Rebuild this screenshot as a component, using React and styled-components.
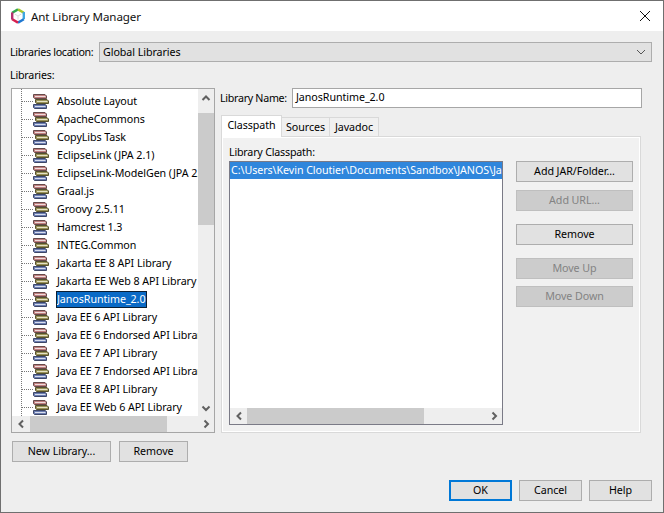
import React from "react";
import styled, { createGlobalStyle } from "styled-components";

const GlobalStyle = createGlobalStyle`
  html, body {
    margin: 0;
    padding: 0;
    background: #eeeeee;
  }
  * {
    box-sizing: border-box;
  }
`;

const Window = styled.div`
  width: 664px;
  height: 513px;
  display: flex;
  flex-direction: column;
  border: 1px solid #6f6f6f;
  background: #eeeeee;
  color: #000;
  font-family: "Noto Sans", "Open Sans", sans-serif;
  font-size: 10.7px;
  letter-spacing: -0.06px;
  overflow: hidden;
`;

const TitleBar = styled.div`
  height: 30px;
  flex: none;
  display: flex;
  align-items: center;
  gap: 5px;
  padding: 0 12px 0 9px;
  background: #fff;
`;

const Title = styled.span`
  flex: 1;
  font-size: 11.6px;
  letter-spacing: -0.1px;
  color: #111;
`;

const Content = styled.div`
  flex: 1;
  display: flex;
  flex-direction: column;
  padding: 11px 11px 11px 9px;
`;

const LocationRow = styled.div`
  display: flex;
  align-items: center;
  gap: 5px;
  height: 20px;
`;

const FieldLabel = styled.span`
  flex: none;
  width: ${(p) => p.$width}px;
  white-space: nowrap;
  letter-spacing: -0.3px;
  padding-bottom: 1px;
`;

const Combo = styled.div`
  flex: 1;
  height: 20px;
  display: flex;
  align-items: center;
  justify-content: space-between;
  padding: 0 5px 1px 3px;
  background: #e1e1e1;
  border: 1px solid #adadad;
`;

const SectionLabel = styled.div`
  margin: ${(p) => p.$margin || "0"};
  line-height: 15px;
  letter-spacing: -0.2px;
`;

const Main = styled.div`
  display: flex;
  margin: 5px 0 0 1px;
  gap: 6px;
`;

const LeftColumn = styled.div`
  width: 204px;
  display: flex;
  flex-direction: column;
`;

const ListBox = styled.div`
  display: flex;
  flex-direction: column;
  background: #fff;
  border: 1px solid ${(p) => p.$borderColor || "#a6a6a6"};
  height: ${(p) => p.$height}px;
`;

const ListBody = styled.div`
  flex: 1;
  min-height: 0;
  display: flex;
`;

const TreeViewport = styled.div`
  flex: 1;
  min-width: 0;
  padding-top: 3px;
  overflow: hidden;
  position: relative;
`;

const TreeGuide = styled.div`
  position: absolute;
  left: 9px;
  top: 0;
  bottom: 0;
  border-left: 1px dotted #777;
`;

const TreeRow = styled.div`
  height: 18px;
  display: flex;
  align-items: center;
  white-space: nowrap;
`;

const Connector = styled.span`
  flex: none;
  width: 11px;
  margin-left: 10px;
  border-top: 1px dotted #777;
`;

const BookIcon = styled.svg`
  flex: none;
  width: 16px;
  height: 16px;
`;

const TreeLabel = styled.span`
  flex: none;
  margin-left: 7px;
  height: 17px;
  line-height: 16px;
  padding: 0 2px 0 1px;
  color: ${(p) => (p.$selected ? "#fff" : "#000")};
  background: ${(p) => (p.$selected ? "#0a6ac6" : "transparent")};
  outline: ${(p) => (p.$selected ? "1px solid #0b1f33" : "none")};
  outline-offset: -1px;
`;

const Track = styled.div`
  flex: none;
  display: flex;
  flex-direction: ${(p) => (p.$vertical ? "column" : "row")};
  background: #eeeeee;
  ${(p) => (p.$vertical ? "width: 16px;" : "height: 16px;")}
`;

const Arrow = styled.div`
  flex: none;
  width: ${(p) => (p.$vertical ? "16px" : "17px")};
  height: ${(p) => (p.$vertical ? "17px" : "16px")};
  display: flex;
  align-items: center;
  justify-content: center;
`;

const TrackSpace = styled.div`
  flex: 1;
  min-width: 0;
  min-height: 0;
`;

const Thumb = styled.div`
  flex: none;
  background: #cbcbcb;
  margin: ${(p) => (p.$vertical ? `${p.$offset}px 0 0` : `0 0 0 ${p.$offset}px`)};
  width: ${(p) => (p.$vertical ? "auto" : `${p.$size}px`)};
  height: ${(p) => (p.$vertical ? `${p.$size}px` : "auto")};
`;

const Button = styled.div`
  height: 21px;
  flex: none;
  display: flex;
  align-items: center;
  justify-content: center;
  padding-bottom: 1px;
  width: ${(p) => p.$width}px;
  margin: ${(p) => p.$margin || "0"};
  background: ${(p) => (p.$disabled ? "#cccccc" : "#e1e1e1")};
  color: ${(p) => (p.$disabled ? "#838383" : "#000")};
  border: ${(p) => (p.$primary ? "2px solid #0078d7" : p.$disabled ? "1px solid #bfbfbf" : "1px solid #adadad")};
`;

const LeftButtons = styled.div`
  display: flex;
  gap: 8px;
  margin: 8px 0 0 1px;
`;

const RightColumn = styled.div`
  flex: 1;
  min-width: 0;
  display: flex;
  flex-direction: column;
  margin-right: 11px;
`;

const NameRow = styled.div`
  display: flex;
  align-items: center;
  gap: 4px;
  height: 20px;
  margin-left: -1px;
`;

const NameInput = styled.div`
  flex: 1;
  height: 20px;
  line-height: 17px;
  padding: 0 3px;
  background: #fff;
  border: 1px solid #a6a6a6;
  margin-right: -1px;
`;

const TabStrip = styled.div`
  display: flex;
  align-items: flex-end;
  height: 22px;
  margin-top: 7px;
  position: relative;
  z-index: 1;
`;

const Tab = styled.div`
  height: ${(p) => (p.$active ? "22px" : "20px")};
  width: ${(p) => p.$width}px;
  display: flex;
  align-items: center;
  justify-content: center;
  padding-bottom: ${(p) => (p.$active ? "3px" : "0")};
  background: ${(p) => (p.$active ? "#fff" : "#f0f0f0")};
  border: 1px solid #d9d9d9;
  border-bottom: ${(p) => (p.$active ? "none" : "1px solid #d9d9d9")};
  margin-left: ${(p) => (p.$active ? "0" : "-1px")};
  &:first-child {
    margin-left: 0;
  }
`;

const TabPanel = styled.div`
  height: 297px;
  margin-top: -1px;
  padding: 8px 7px 7px;
  display: flex;
  background: #f1f1f1;
  border: 1px solid #d9d9d9;
  box-shadow: inset 0 0 0 1px #fff;
`;

const ClassColumn = styled.div`
  width: 274px;
  display: flex;
  flex-direction: column;
`;

const ClassViewport = styled.div`
  flex: 1;
  min-height: 0;
  overflow: hidden;
`;

const ClassRow = styled.div`
  height: 17px;
  line-height: 16px;
  padding-left: 1px;
  white-space: nowrap;
  overflow: hidden;
  color: #fff;
  background: #2f86dc;
`;

const SideButtons = styled.div`
  display: flex;
  flex-direction: column;
  margin: 16px 0 0 13px;
`;

const Footer = styled.div`
  display: flex;
  justify-content: flex-end;
  gap: 7px;
  margin-top: auto;
`;

const LIBRARIES = [
  "Absolute Layout",
  "ApacheCommons",
  "CopyLibs Task",
  "EclipseLink (JPA 2.1)",
  "EclipseLink-ModelGen (JPA 2.1)",
  "Graal.js",
  "Groovy 2.5.11",
  "Hamcrest 1.3",
  "INTEG.Common",
  "Jakarta EE 8 API Library",
  "Jakarta EE Web 8 API Library",
  "JanosRuntime_2.0",
  "Java EE 6 API Library",
  "Java EE 6 Endorsed API Library",
  "Java EE 7 API Library",
  "Java EE 7 Endorsed API Library",
  "Java EE 8 API Library",
  "Java EE Web 6 API Library",
];

function Logo() {
  return (
    <svg width="16" height="16" viewBox="0 0 16 16" fill="none">
      <path d="M8 1.5 L13.6 4.7 L8 8 L2.4 4.7 Z" fill="#fff" />
      <path d="M2.2 4.8 L8 1.4" stroke="#2fa84f" strokeWidth="2.4" />
      <path d="M8 1.4 L13.8 4.8" stroke="#a6c72d" strokeWidth="2.4" />
      <path d="M13.8 4 L13.8 11.2" stroke="#3fa7e0" strokeWidth="2.4" />
      <path d="M13.8 11.2 L8 14.6" stroke="#1f78d1" strokeWidth="2.4" />
      <path d="M8 14.6 L2.2 11.2" stroke="#d8204f" strokeWidth="2.4" />
      <path d="M2.2 11.6 L2.2 4.4" stroke="#b5306e" strokeWidth="2.4" />
      <path d="M4.6 6 L8 8 L11.4 6 M8 8 V11.6" stroke="#dcdcdc" strokeWidth="1" />
    </svg>
  );
}

function Books() {
  return (
    <BookIcon viewBox="0 0 16 16">
      <path d="M0.5 1.5 H12 L13.5 3 V5.5 H1.5 L0.5 4.5 Z" fill="#c07f7f" stroke="#664a4a" strokeWidth="1" />
      <path d="M2 3.5 H12.5" stroke="#eedddd" strokeWidth="1" />
      <path d="M2.5 6.5 H14 L15.5 8 V10.5 H3.5 L2.5 9.5 Z" fill="#9a9358" stroke="#55512f" strokeWidth="1" />
      <path d="M4 8.5 H14.5" stroke="#e4e2c6" strokeWidth="1" />
      <path d="M0.5 11.5 H12 L13.5 12.5 V15.5 H1.5 L0.5 14.5 Z" fill="#6c7eb2" stroke="#3d4768" strokeWidth="1" />
      <path d="M2 13.5 H12.5" stroke="#d8deee" strokeWidth="1" />
    </BookIcon>
  );
}

const CHEVRONS = {
  up: "M1.5 7 L5 3.5 L8.5 7",
  down: "M1.5 3.5 L5 7 L8.5 3.5",
  left: "M7 1.5 L3.5 5 L7 8.5",
  right: "M3.5 1.5 L7 5 L3.5 8.5",
};

function Chevron({ dir }) {
  return (
    <svg width="10" height="10" viewBox="0 0 10 10" fill="none">
      <path d={CHEVRONS[dir]} stroke="#606060" strokeWidth="2" />
    </svg>
  );
}

function ScrollBar({ vertical, offset, size }) {
  return (
    <Track $vertical={vertical}>
      <Arrow $vertical={vertical}>
        <Chevron dir={vertical ? "up" : "left"} />
      </Arrow>
      <Thumb $vertical={vertical} $offset={offset} $size={size} />
      <TrackSpace />
      <Arrow $vertical={vertical}>
        <Chevron dir={vertical ? "down" : "right"} />
      </Arrow>
    </Track>
  );
}

export default function App() {
  return (
    <>
      <GlobalStyle />
      <Window>
        <TitleBar>
          <Logo />
          <Title>Ant Library Manager</Title>
          <svg width="12" height="12" viewBox="0 0 12 12" fill="none">
            <path d="M1 1 L11 11 M11 1 L1 11" stroke="#111" strokeWidth="1" />
          </svg>
        </TitleBar>
        <Content>
          <LocationRow>
            <FieldLabel $width={84}>Libraries location:</FieldLabel>
            <Combo>
              <span>Global Libraries</span>
              <svg width="10" height="6" viewBox="0 0 10 6" fill="none">
                <path d="M1 1 L5 5 L9 1" stroke="#555" strokeWidth="1" />
              </svg>
            </Combo>
          </LocationRow>
          <SectionLabel $margin="6px 0 0">Libraries:</SectionLabel>
          <Main>
            <LeftColumn>
              <ListBox $height={345}>
                <ListBody>
                  <TreeViewport>
                    <TreeGuide />
                    {LIBRARIES.map((name) => (
                      <TreeRow key={name}>
                        <Connector />
                        <Books />
                        <TreeLabel $selected={name === "JanosRuntime_2.0"}>{name}</TreeLabel>
                      </TreeRow>
                    ))}
                  </TreeViewport>
                  <ScrollBar vertical offset={7} size={112} />
                </ListBody>
                <ScrollBar offset={1} size={137} />
              </ListBox>
              <LeftButtons>
                <Button $width={99}>New Library...</Button>
                <Button $width={69}>Remove</Button>
              </LeftButtons>
            </LeftColumn>
            <RightColumn>
              <NameRow>
                <FieldLabel $width={68}>Library Name:</FieldLabel>
                <NameInput>JanosRuntime_2.0</NameInput>
              </NameRow>
              <TabStrip>
                <Tab $active $width={61}>Classpath</Tab>
                <Tab $width={49}>Sources</Tab>
                <Tab $width={50}>Javadoc</Tab>
              </TabStrip>
              <TabPanel>
                <ClassColumn>
                  <SectionLabel $margin="0 0 1px">Library Classpath:</SectionLabel>
                  <ListBox $height={264} $borderColor="#7a7a86">
                    <ClassViewport>
                      <ClassRow>C:\Users\Kevin Cloutier\Documents\Sandbox\JANOS\Jan</ClassRow>
                    </ClassViewport>
                    <ScrollBar offset={0} size={177} />
                  </ListBox>
                </ClassColumn>
                <SideButtons>
                  <Button $width={117}>Add JAR/Folder...</Button>
                  <Button $width={117} $disabled $margin="8px 0 0">Add URL...</Button>
                  <Button $width={117} $margin="13px 0 0">Remove</Button>
                  <Button $width={117} $disabled $margin="13px 0 0">Move Up</Button>
                  <Button $width={117} $disabled $margin="7px 0 0">Move Down</Button>
                </SideButtons>
              </TabPanel>
            </RightColumn>
          </Main>
          <Footer>
            <Button $width={63} $primary>OK</Button>
            <Button $width={63}>Cancel</Button>
            <Button $width={63}>Help</Button>
          </Footer>
        </Content>
      </Window>
    </>
  );
}
